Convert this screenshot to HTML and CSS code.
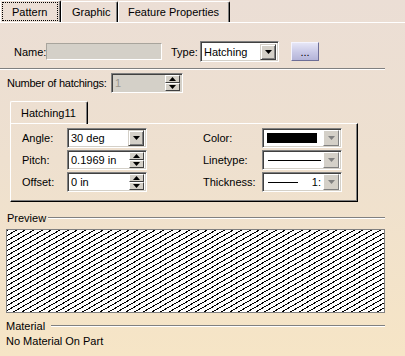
FILE: index.html
```html
<!DOCTYPE html>
<html>
<head>
<meta charset="utf-8">
<link rel="stylesheet" href="styles.css">
</head>
<body>
<div class="window">
  <div class="tabs">
    <div class="tab active"><span class="focus">Pattern</span></div>
    <div class="tab graphic">Graphic</div>
    <div class="tab feature">Feature Properties</div>
  </div>

  <div class="row name-row">
    <span class="lbl name-lbl">Name:</span>
    <div class="field disabled name-field"></div>
    <span class="lbl type-lbl">Type:</span>
    <div class="combo type-combo">
      <span class="val">Hatching</span>
      <span class="dd"><svg width="7" height="4" viewBox="0 0 7 4"><path d="M0 0h7L3.5 4z" fill="#000"/></svg></span>
    </div>
    <div class="dots">...</div>
  </div>

  <div class="sep"></div>

  <div class="row count-row">
    <span class="lbl">Number of hatchings:</span>
    <div class="combo disabled count-field">
      <span class="val grey">1</span>
      <span class="spin">
        <span class="sbtn"><svg width="7" height="4" viewBox="0 0 7 4"><path d="M0 4h7L3.5 0z" fill="#000"/></svg></span>
        <span class="sbtn"><svg width="7" height="4" viewBox="0 0 7 4"><path d="M0 0h7L3.5 4z" fill="#000"/></svg></span>
      </span>
    </div>
  </div>

  <div class="subtabs"><div class="subtab">Hatching11</div></div>

  <div class="panel">
    <span class="lbl">Angle:</span>
    <div class="combo">
      <span class="val">30 deg</span>
      <span class="dd"><svg width="7" height="4" viewBox="0 0 7 4"><path d="M0 0h7L3.5 4z" fill="#000"/></svg></span>
    </div>
    <span class="lbl">Color:</span>
    <div class="combo swatch-combo">
      <span class="swatch"></span>
      <span class="dd off"><svg width="7" height="4" viewBox="0 0 7 4"><path d="M0 0h7L3.5 4z" fill="#808080"/></svg></span>
    </div>

    <span class="lbl">Pitch:</span>
    <div class="combo">
      <span class="val">0.1969 in</span>
      <span class="spin">
        <span class="sbtn"><svg width="7" height="4" viewBox="0 0 7 4"><path d="M0 4h7L3.5 0z" fill="#000"/></svg></span>
        <span class="sbtn"><svg width="7" height="4" viewBox="0 0 7 4"><path d="M0 0h7L3.5 4z" fill="#000"/></svg></span>
      </span>
    </div>
    <span class="lbl">Linetype:</span>
    <div class="combo swatch-combo">
      <span class="line long"></span>
      <span class="dd off"><svg width="7" height="4" viewBox="0 0 7 4"><path d="M0 0h7L3.5 4z" fill="#808080"/></svg></span>
    </div>

    <span class="lbl">Offset:</span>
    <div class="combo">
      <span class="val">0 in</span>
      <span class="spin">
        <span class="sbtn"><svg width="7" height="4" viewBox="0 0 7 4"><path d="M0 4h7L3.5 0z" fill="#000"/></svg></span>
        <span class="sbtn"><svg width="7" height="4" viewBox="0 0 7 4"><path d="M0 0h7L3.5 4z" fill="#000"/></svg></span>
      </span>
    </div>
    <span class="lbl">Thickness:</span>
    <div class="combo swatch-combo">
      <span class="line short"></span>
      <span class="thick">1:</span>
      <span class="dd off"><svg width="7" height="4" viewBox="0 0 7 4"><path d="M0 0h7L3.5 4z" fill="#808080"/></svg></span>
    </div>
  </div>

  <div class="section preview-head"><span>Preview</span><span class="rule"></span></div>
  <div class="preview"></div>

  <div class="section material-head"><span>Material</span><span class="rule"></span></div>
  <div class="material">No Material On Part</div>
</div>
</body>
</html>
```

FILE: styles.css
```css
html, body {
  margin: 0;
  padding: 0;
}
body {
  width: 405px;
  height: 356px;
  overflow: hidden;
  background: linear-gradient(180deg, #ebded5 0%, #eee0cf 45%, #f6e5c6 100%);
  font-family: "Liberation Sans", Arial, sans-serif;
  font-size: 11px;
  color: #000;
  white-space: nowrap;
}
.window {
  display: flex;
  flex-direction: column;
  height: 356px;
}
.lbl {
  flex: none;
  white-space: nowrap;
}

/* top tabs */
.tabs {
  display: flex;
  height: 22px;
  border-bottom: 1px solid #fff;
  align-items: flex-end;
}
.tab {
  box-sizing: border-box;
  flex: none;
  height: 21px;
  display: flex;
  align-items: center;
  border-top: 1px solid #fff;
  border-left: 1px solid #fff;
  border-right: 1px solid #000;
  box-shadow: inset -1px 0 #808080;
  border-radius: 2px 2px 0 0;
  padding: 0 0 1px 10px;
  white-space: nowrap;
}
.tab.active {
  height: 22px;
  width: 61px;
  padding: 1px 2px 1px 1px;
}
.focus {
  flex: 1;
  align-self: stretch;
  display: flex;
  align-items: center;
  padding-left: 9px;
  border: 1px dotted #000;
}
.tab.graphic {
  width: 57px;
  padding-left: 10px;
}
.tab.feature {
  width: 112px;
  padding-left: 9px;
}

/* rows */
.row {
  display: flex;
  align-items: center;
}
.name-row {
  margin-top: 18px;
  height: 21px;
}
.name-lbl {
  margin-left: 14px;
  width: 32px;
}
.field {
  box-sizing: border-box;
  flex: none;
  border: 1px solid;
  border-color: #808080 #fff #fff #808080;
}
.name-field {
  width: 116px;
  height: 17px;
  background: #d4d0c8;
  border-color: #a8a49c #fff #fff #a8a49c;
}
.type-lbl {
  margin-left: 9px;
  width: 29px;
}
.combo {
  box-sizing: border-box;
  flex: none;
  width: 80px;
  height: 20px;
  border: 1px solid;
  border-color: #808080 #fff #fff #808080;
  box-shadow: inset 1px 1px #404040, inset -1px -1px #d4d0c8;
  background: #fff;
  display: flex;
  align-items: center;
  padding: 2px 2px 2px 3px;
}
.type-combo {
  width: 79px;
  height: 21px;
}
.combo.disabled {
  background: #d4d0c8;
}
.val {
  flex: 1;
  white-space: nowrap;
}
.grey {
  color: #9a978f;
}
.dd {
  box-sizing: border-box;
  width: 16px;
  height: 16px;
  flex: none;
  background: #d4d0c8;
  border: 1px solid;
  border-color: #d4d0c8 #404040 #404040 #d4d0c8;
  box-shadow: inset 1px 1px #fff, inset -1px -1px #808080;
  display: flex;
  align-items: center;
  justify-content: center;
}
.dd.off {
  border-color: #fff #808080 #808080 #fff;
  box-shadow: none;
  background: #d4d0c8;
}
.dots {
  box-sizing: border-box;
  flex: none;
  margin-left: 12px;
  width: 28px;
  height: 19px;
  background: linear-gradient(180deg, #e6e6f6 0%, #c8c8e6 55%, #b4b4d8 100%);
  border: 1px solid;
  border-color: #f4f4ff #6e6e96 #6e6e96 #f4f4ff;
  display: flex;
  align-items: flex-end;
  justify-content: center;
  padding-bottom: 3px;
  font-size: 11px;
  line-height: 10px;
}

.sep {
  margin-top: 6px;
  width: 385px;
  height: 1px;
  background: #808080;
  border-bottom: 1px solid #fff;
}

.count-row {
  margin-top: 3px;
  height: 20px;
}
.count-row .lbl {
  margin-left: 7px;
  width: 104px;
  letter-spacing: -0.25px;
}
.count-field {
  width: 72px;
}
.spin {
  flex: none;
  width: 15px;
  height: 16px;
  display: flex;
  flex-direction: column;
}
.sbtn {
  box-sizing: border-box;
  height: 8px;
  background: #d4d0c8;
  border: 1px solid;
  border-color: #fff #404040 #404040 #fff;
  display: flex;
  align-items: center;
  justify-content: center;
}

/* sub tab + panel */
.subtabs {
  margin-top: 8px;
  margin-left: 10px;
  display: flex;
  height: 22px;
}
.subtab {
  box-sizing: border-box;
  width: 78px;
  height: 23px;
  border-top: 1px solid #fff;
  border-left: 1px solid #fff;
  border-right: 1px solid #000;
  box-shadow: inset -1px 0 #808080;
  border-radius: 2px 2px 0 0;
  padding: 5px 0 0 10px;
  position: relative;
  z-index: 1;
}
.panel {
  box-sizing: border-box;
  margin-left: 10px;
  width: 348px;
  height: 79px;
  border-top: 1px solid #fff;
  border-left: 1px solid #fff;
  border-right: 1px solid #000;
  border-bottom: 1px solid #000;
  box-shadow: inset -1px -1px #808080;
  display: grid;
  grid-template-columns: 45px 80px 56px 59px 80px;
  grid-template-rows: 20px 20px 20px;
  row-gap: 2px;
  padding: 4px 0 0 11px;
  align-items: center;
}
.panel > .lbl:nth-child(4n+3) {
  grid-column: 4;
}
.panel > .combo:nth-child(4n) {
  grid-column: 5;
}
.swatch-combo {
  padding: 2px;
}
.swatch {
  flex: 1;
  height: 14px;
  margin-right: 4px;
  background: #000;
  border: 2px solid #fff;
  box-sizing: border-box;
}
.line {
  height: 1px;
  background: #000;
}
.line.long {
  flex: 1;
  margin: 0 2px 0 3px;
}
.line.short {
  width: 30px;
  margin-left: 3px;
}
.thick {
  flex: 1;
  text-align: right;
  padding-right: 2px;
}

/* sections */
.section {
  display: flex;
  align-items: center;
  height: 12px;
  margin-left: 7px;
  width: 378px;
}
.section .rule {
  flex: 1;
  height: 1px;
  background: #808080;
  border-bottom: 1px solid #fff;
  margin-left: 2px;
}
.preview-head {
  margin-top: 10px;
}
.preview {
  margin-top: 5px;
  margin-left: 6px;
  box-sizing: border-box;
  width: 379px;
  height: 84px;
  border: 1px solid #808080;
  background: repeating-linear-gradient(150deg, #000 0 1px, #fff 1px 4.33px);
}
.material-head {
  margin-top: 7px;
  margin-left: 6px;
  width: 379px;
}
.material-head .rule {
  margin-left: 6px;
}
.material {
  margin-top: 3px;
  margin-left: 6px;
  height: 13px;
}
```
